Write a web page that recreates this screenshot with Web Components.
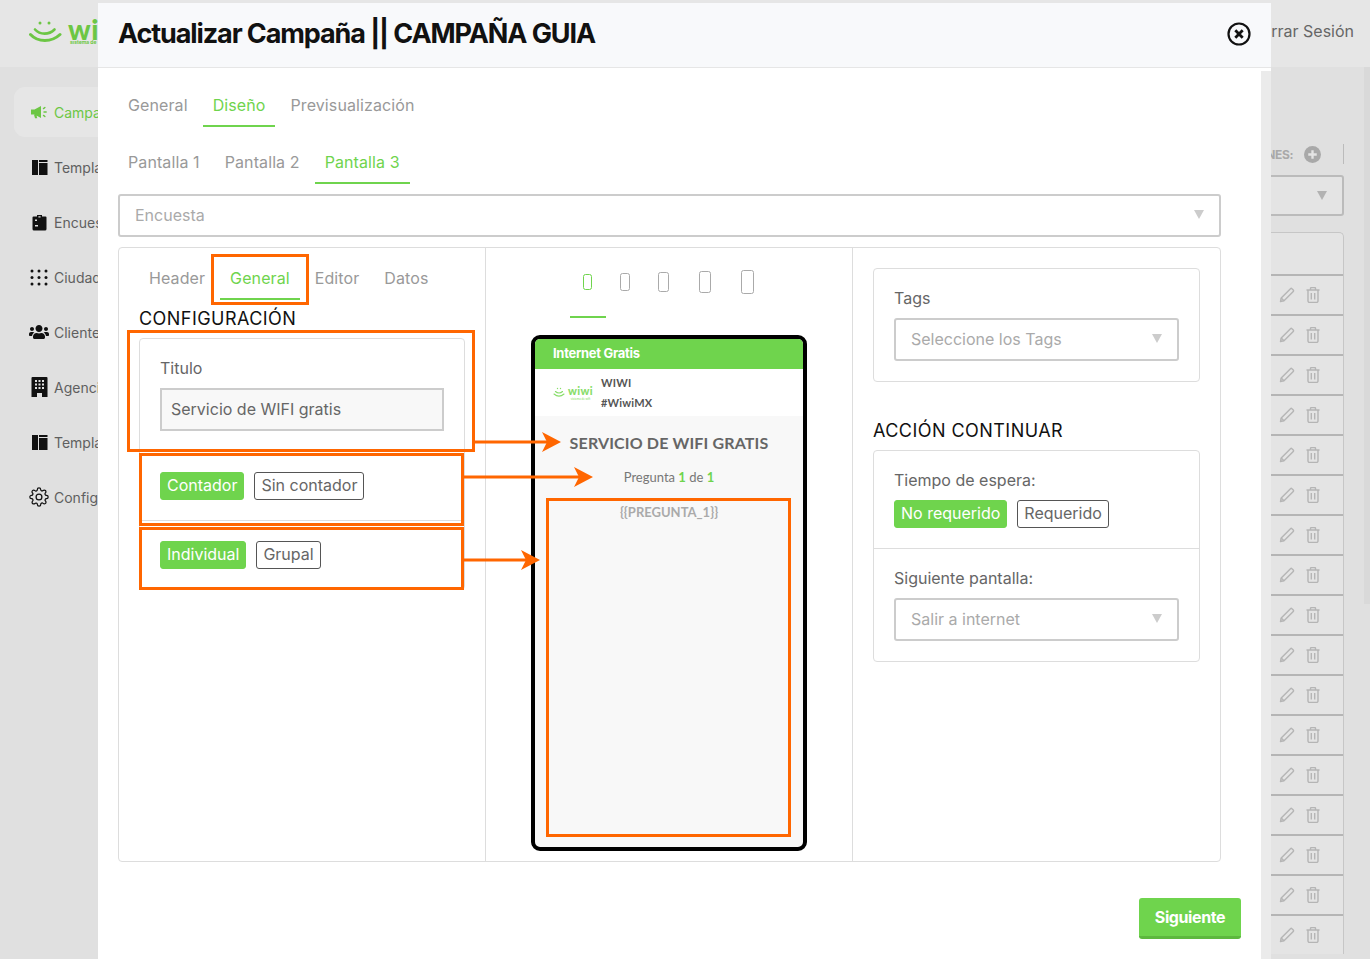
<!DOCTYPE html>
<html lang="es">
<head>
<meta charset="utf-8">
<title>Actualizar Campaña</title>
<style>
    html, body { margin: 0; height: 963px; overflow: hidden; background: #fff; }
    body { font-family: "Inter", "Liberation Sans", sans-serif; font-size: 16px; color: #666; position: relative; }
</style>
</head>
<body>
<app-backdrop></app-backdrop>

<campaign-modal title="Actualizar Campaña || CAMPAÑA GUIA">
    <tab-row items="General,Diseño,Previsualización" active="1"></tab-row>
    <tab-row items="Pantalla 1,Pantalla 2,Pantalla 3" active="2" style="margin-top:25px"></tab-row>
    <select-box text="Encuesta" style="margin-top:10px"></select-box>

    <three-panes>
        <div slot="left">
            <tab-row items="Header,General,Editor,Datos" active="1"></tab-row>
            <section-title style="margin-top:8px">CONFIGURACIÓN</section-title>
            <panel-card>
                <card-section>
                    <field-label>Titulo</field-label>
                    <text-field value="Servicio de WIFI gratis"></text-field>
                </card-section>
                <card-section>
                    <seg-buttons items="Contador,Sin contador"></seg-buttons>
                </card-section>
                <card-section last>
                    <seg-buttons items="Individual,Grupal"></seg-buttons>
                </card-section>
            </panel-card>
        </div>

        <div slot="center">
            <device-tabs></device-tabs>
            <phone-preview></phone-preview>
        </div>

        <div slot="right">
            <panel-card>
                <card-section last>
                    <field-label>Tags</field-label>
                    <select-box text="Seleccione los Tags"></select-box>
                </card-section>
            </panel-card>
            <section-title style="margin-top:38px">ACCIÓN CONTINUAR</section-title>
            <panel-card>
                <card-section>
                    <field-label>Tiempo de espera:</field-label>
                    <seg-buttons items="No requerido,Requerido"></seg-buttons>
                </card-section>
                <card-section last>
                    <field-label>Siguiente pantalla:</field-label>
                    <select-box text="Salir a internet"></select-box>
                </card-section>
            </panel-card>
        </div>
    </three-panes>

    <modal-footer>Siguiente</modal-footer>
</campaign-modal>

<mark-box x="211" y="254" w="98" h="51"></mark-box>
<mark-box x="127" y="330" w="348" h="122"></mark-box>
<mark-box x="139" y="453" w="325" h="73"></mark-box>
<mark-box x="139" y="527" w="325" h="63"></mark-box>
<mark-box x="546" y="498" w="245" h="339"></mark-box>
<mark-arrow x="474" y="442" to="561"></mark-arrow>
<mark-arrow x="464" y="477" to="593"></mark-arrow>
<mark-arrow x="464" y="560" to="540"></mark-arrow>

<script>
const ICONS = {
    bullhorn: `<svg viewBox="0 0 18 14" width="18" height="14"><path fill="currentColor" d="M1 4.500h3.500L11 1v12L4.500 9.500H1zM4 9.800h2.300l1 3.400H5z"/><path fill="none" stroke="currentColor" stroke-width="1.400" stroke-linecap="round" d="M13.500 3.600l1.400-1.100M14 7h2.200M13.500 10.400l1.400 1.100"/></svg>`,
    template: `<svg viewBox="0 0 17 17" width="17" height="17"><path fill="currentColor" d="M1 1h6v15H1zM8 1h8.500v2H8zM8 4h8.500v12H8z"/></svg>`,
    clipboard: `<svg viewBox="0 0 17 17" width="17" height="17"><path fill="currentColor" d="M2.500 2.500H6V1h5v1.500h3.500a1 1 0 0 1 1 1V15a1.500 1.500 0 0 1-1.500 1.500H3A1.500 1.500 0 0 1 1.500 15V3.500a1 1 0 0 1 1-1z"/><path fill="#e0e0e0" d="M7.400 2.200h2.200v1.400H7.400zM4 5.500h2v1.500H4zM4 11h3v1.500H4z"/></svg>`,
    dots: `<svg viewBox="0 0 18 17" width="18" height="17"><g fill="currentColor"><circle cx="2" cy="2" r="1.500"/><circle cx="9" cy="2" r="1.500"/><circle cx="16" cy="2" r="1.500"/><circle cx="2" cy="8.500" r="1.500"/><circle cx="9" cy="8.500" r="1.500"/><circle cx="16" cy="8.500" r="1.500"/><circle cx="2" cy="15" r="1.500"/><circle cx="9" cy="15" r="1.500"/><circle cx="16" cy="15" r="1.500"/></g></svg>`,
    users: `<svg viewBox="0 0 640 512" width="20" height="16"><path fill="currentColor" d="M96 224c35.300 0 64-28.700 64-64s-28.700-64-64-64-64 28.700-64 64 28.700 64 64 64zm448 0c35.300 0 64-28.700 64-64s-28.700-64-64-64-64 28.700-64 64 28.700 64 64 64zm32 32h-64c-17.600 0-33.500 7.100-45.100 18.600 40.300 22.100 68.900 62 75.100 109.400h66c17.700 0 32-14.300 32-32v-32c0-35.300-28.700-64-64-64zm-256 0c61.900 0 112-50.100 112-112S381.900 32 320 32 208 82.100 208 144s50.100 112 112 112zm76.800 32h-8.300c-20.800 10-43.900 16-68.500 16s-47.600-6-68.500-16h-8.300C179.600 288 128 339.600 128 403.200V432c0 26.500 21.500 48 48 48h288c26.500 0 48-21.500 48-48v-28.800c0-63.600-51.600-115.200-115.200-115.200zm-223.700-13.400C161.500 263.100 145.600 256 128 256H64c-35.300 0-64 28.700-64 64v32c0 17.700 14.300 32 32 32h65.900c6.300-47.400 34.900-87.300 75.200-109.400z"/></svg>`,
    building: `<svg viewBox="0 0 17 20" width="17" height="20"><path fill="currentColor" fill-rule="evenodd" d="M1.500 0h14a1 1 0 0 1 1 1v19h-5.500v-4H6v4H.5V1a1 1 0 0 1 1-1zM4 3v2h2V3zm3.500 0v2h2V3zM11 3v2h2V3zM4 6.500v2h2v-2zm3.500 0v2h2v-2zm3.500 0v2h2v-2zM4 10v2h2v-2zm3.500 0v2h2v-2zm3.500 0v2h2v-2z"/></svg>`,
    gear: `<svg viewBox="0 0 24 24" width="20" height="20" fill="none" stroke="currentColor" stroke-width="1.500"><circle cx="12" cy="12" r="3.500"/><path d="M19.400 15a1.650 1.650 0 0 0 .33 1.820l.06.06a2 2 0 0 1 0 2.830 2 2 0 0 1-2.830 0l-.06-.06a1.650 1.650 0 0 0-1.820-.33 1.650 1.650 0 0 0-1 1.510V21a2 2 0 0 1-2 2 2 2 0 0 1-2-2v-.09A1.650 1.650 0 0 0 9 19.400a1.650 1.650 0 0 0-1.820.33l-.06.06a2 2 0 0 1-2.830 0 2 2 0 0 1 0-2.830l.06-.06a1.650 1.650 0 0 0 .33-1.820 1.650 1.650 0 0 0-1.510-1H3a2 2 0 0 1-2-2 2 2 0 0 1 2-2h.09A1.650 1.650 0 0 0 4.600 9a1.650 1.650 0 0 0-.33-1.820l-.06-.06a2 2 0 0 1 0-2.830 2 2 0 0 1 2.830 0l.06.06a1.650 1.650 0 0 0 1.820.33H9a1.650 1.650 0 0 0 1-1.510V3a2 2 0 0 1 2-2 2 2 0 0 1 2 2v.09a1.650 1.650 0 0 0 1 1.510 1.650 1.650 0 0 0 1.820-.33l.06-.06a2 2 0 0 1 2.830 0 2 2 0 0 1 0 2.830l-.06.06a1.650 1.650 0 0 0-.33 1.820V9a1.650 1.650 0 0 0 1.510 1H21a2 2 0 0 1 2 2 2 2 0 0 1-2 2h-.09a1.650 1.650 0 0 0-1.510 1z"/></svg>`,
    pencil: `<svg viewBox="0 0 16 16" width="16" height="16" fill="none" stroke="currentColor" stroke-width="1.400" stroke-linejoin="round"><path d="M1.500 14.500l.7-3.500L11.500 1.700a1 1 0 0 1 1.400 0l1.400 1.400a1 1 0 0 1 0 1.400L5 13.800z"/><path d="M2.200 11l2.800 2.800"/></svg>`,
    trash: `<svg viewBox="0 0 14 16" width="14" height="16" fill="none" stroke="currentColor" stroke-width="1.400"><path d="M.5 3h13M4.500 3V1.500a1 1 0 0 1 1-1h3a1 1 0 0 1 1 1V3M2 3v11a1.500 1.500 0 0 0 1.500 1.500h7A1.500 1.500 0 0 0 12 14V3M5.300 6v6.500M8.700 6v6.500"/></svg>`,
    close: `<svg viewBox="0 0 24 24" width="24" height="24" fill="none" stroke="#111" stroke-width="2.200"><circle cx="12" cy="12" r="10.500"/><path stroke-width="2.800" d="M8.300 8.300l7.400 7.400M15.700 8.300l-7.400 7.400"/></svg>`,
    plus: `<svg viewBox="0 0 16 16" width="17" height="17"><circle cx="8" cy="8" r="8" fill="#a9a9a9"/><path d="M8 4v8M4 8h8" stroke="#e4e4e4" stroke-width="2.200"/></svg>`
}

class WiIcon extends HTMLElement {
    constructor() {
        super()
        this.attachShadow({ mode: 'open' })
        this.shadowRoot.innerHTML = /*html*/`
            <style>:host { display: inline-flex; align-items: center; justify-content: center; line-height: 0; }</style>
            ${ICONS[this.getAttribute("name")]}
        `
    }
}

class AppBackdrop extends HTMLElement {
    constructor() {
        super()
        this.attachShadow({ mode: 'open' })
        const nav = [
            ["bullhorn", "Campañas"], ["template", "Templates"], ["clipboard", "Encuestas"], ["dots", "Ciudades"],
            ["users", "Clientes"], ["building", "Agencias"], ["template", "Templates"], ["gear", "Configuración"]
        ]
        const rows = Array.from({ length: 17 }, () => /*html*/`
            <div class="row"><wi-icon name="pencil"></wi-icon><wi-icon name="trash"></wi-icon></div>
        `).join("")
        this.shadowRoot.innerHTML = /*html*/`
            <style>
                :host { display: flex; flex-direction: column; height: 959px; overflow: hidden; background: #e0e0e0; color: #666; }
                .top {
                    height: 67px;
                    flex: none;
                    box-sizing: border-box;
                    background: #e6e6e6;
                    display: flex;
                    align-items: center;
                    justify-content: space-between;
                    padding: 0 16px 5px 29px;
                }
                .logo { display: flex; align-items: center; gap: 6px; color: #6cc644; margin-top: 2px; }
                .word { display: flex; flex-direction: column; line-height: 1; white-space: nowrap; }
                .word b { font-family: "Lato", sans-serif; font-weight: 900; font-size: 28px; line-height: 19px; letter-spacing: .5px; }
                .word small { font-size: 5px; line-height: 6px; font-weight: 700; padding-left: 2px; }
                .logout { font-size: 16px; color: #666; }
                .body { flex: 1; display: flex; min-height: 0; }
                nav { width: 220px; padding: 20px 14px; box-sizing: border-box; }
                .item {
                    height: 50px;
                    margin-bottom: 5px;
                    display: flex;
                    align-items: center;
                    box-sizing: border-box;
                    border-radius: 11px;
                    font-size: 14px;
                    color: #5f5f5f;
                }
                .item wi-icon { width: 22px; margin: 0 4px 0 14px; color: #111; }
                .item.on { background: #e6e6e6; color: #6cc644; }
                .item.on wi-icon { color: #6cc644; }
                main { flex: 1; min-width: 0; padding: 77px 6px 0 20px; display: flex; flex-direction: column; align-items: flex-end; overflow: hidden; }
                .actions { display: flex; align-items: center; height: 20px; font-size: 12px; font-weight: 700; color: #a9a9a9; }
                .actions span { letter-spacing: -.4px; }
                .actions wi-icon { margin: 0 22px 0 11px; }
                .actions i { width: 1px; height: 20px; background: #bbb; }
                .sel {
                    width: 100%;
                    height: 41px;
                    margin-top: 11px;
                    box-sizing: border-box;
                    border: 2px solid #bbb;
                    border-radius: 3px;
                    background: #e4e4e4;
                    display: flex;
                    align-items: center;
                    justify-content: flex-end;
                    padding-right: 15px;
                }
                .sel::after { content: ""; border: 5.500px solid transparent; border-top: 9px solid #b2b2b2; border-bottom: 0; }
                .table {
                    width: 100%;
                    margin-top: 16px;
                    border: 1px solid #c6c6c6;
                    border-bottom: 0;
                    border-radius: 5px 5px 0 0;
                    box-sizing: border-box;
                    background: #e4e4e4;
                }
                .head { height: 41px; }
                .row {
                    height: 38px;
                    border-top: 2px solid #b5b5b5;
                    display: flex;
                    align-items: center;
                    justify-content: flex-end;
                    gap: 11px;
                    padding-right: 23px;
                    color: #b5b5b5;
                }
                .scroll { flex: 0 0 20px; display: flex; justify-content: flex-end; }
                .bar { width: 6px; height: 537px; background: #d9d9d9; }
            </style>
            <div class="top">
                <div class="logo">
                    <svg width="33" height="24" viewBox="0 0 33 24" fill="none" stroke="currentColor" stroke-linecap="round">
                        <circle cx="11" cy="3" r="1.500" fill="currentColor" stroke="none"/>
                        <circle cx="20" cy="3" r="1.500" fill="currentColor" stroke="none"/>
                        <path stroke-width="2.600" d="M6 9.500c5 5.500 14 5.500 19.500 0"/>
                        <path stroke-width="3" d="M1.500 14.500c7.500 8 21 8 29.500 0"/>
                    </svg>
                    <div class="word"><b>wi</b><small>sistema de</small></div>
                </div>
                <span class="logout">Cerrar Sesión</span>
            </div>
            <div class="body">
                <nav>
                    ${nav.map(([icon, text], i) => /*html*/`
                        <div class="item ${i == 0 ? "on" : ""}"><wi-icon name="${icon}"></wi-icon>${text}</div>
                    `).join("")}
                </nav>
                <main>
                    <div class="actions"><span>ACCIONES:</span><wi-icon name="plus"></wi-icon><i></i></div>
                    <div class="sel"></div>
                    <div class="table"><div class="head"></div>${rows}</div>
                </main>
                <div class="scroll"><div class="bar"></div></div>
            </div>
        `
    }
}

class CampaignModal extends HTMLElement {
    constructor() {
        super()
        this.attachShadow({ mode: 'open' })
        this.shadowRoot.innerHTML = /*html*/`
            <style>
                :host {
                    position: absolute;
                    left: 98px;
                    top: 3px;
                    width: 1173px;
                    height: 956px;
                    display: flex;
                    flex-direction: column;
                }
                header {
                    height: 65px;
                    flex: none;
                    box-sizing: border-box;
                    background: #f8f9fb;
                    border-bottom: 1px solid #e6e6e6;
                    padding: 0 20px 3px;
                    display: flex;
                    align-items: center;
                    justify-content: space-between;
                }
                h1 { margin: 0 0 1px; font-size: 27px; font-weight: 700; letter-spacing: -1.1px; color: #111; }
                .wrap { flex: 1; display: flex; min-height: 0; background: #fff; }
                .content { width: 1163px; box-sizing: border-box; padding: 27px 40px 0 20px; background: #fff; }
                .track { flex: 1; background: #ebebeb; margin-top: 3px; }
            </style>
            <header>
                <h1>${this.getAttribute("title")}</h1>
                <wi-icon name="close"></wi-icon>
            </header>
            <div class="wrap">
                <div class="content"><slot></slot></div>
                <div class="track"></div>
            </div>
        `
    }
}

class TabRow extends HTMLElement {
    constructor() {
        super()
        this.attachShadow({ mode: 'open' })
        const items = this.getAttribute("items").split(",")
        const active = +this.getAttribute("active")
        this.shadowRoot.innerHTML = /*html*/`
            <style>
                :host { display: flex; gap: 5px; }
                span {
                    padding: 0 10px 10px;
                    line-height: 20px;
                    font-size: 16px;
                    letter-spacing: .1px;
                    color: #999;
                    border-bottom: 2px solid transparent;
                }
                .on { color: #6fd44d; border-bottom-color: #6fd44d; }
            </style>
            ${items.map((t, i) => `<span class="${i == active ? "on" : ""}">${t}</span>`).join("")}
        `
    }
}

class SelectBox extends HTMLElement {
    constructor() {
        super()
        this.attachShadow({ mode: 'open' })
        this.shadowRoot.innerHTML = /*html*/`
            <style>
                :host {
                    display: flex;
                    height: 43px;
                    box-sizing: border-box;
                    border: 2px solid #ccc;
                    border-radius: 3px;
                    align-items: center;
                    justify-content: space-between;
                    padding: 0 15px 2px 15px;
                    color: #aaa;
                    font-size: 16px;
                    background: #fff;
                }
                i { border: 5px solid transparent; border-top: 9px solid #ccc; border-bottom: 0; }
            </style>
            <span>${this.getAttribute("text")}</span><i></i>
        `
    }
}

class ThreePanes extends HTMLElement {
    constructor() {
        super()
        this.attachShadow({ mode: 'open' })
        this.shadowRoot.innerHTML = /*html*/`
            <style>
                :host {
                    display: grid;
                    grid-template-columns: repeat(3, 1fr);
                    height: 615px;
                    margin-top: 10px;
                    box-sizing: border-box;
                    border: 1px solid #ddd;
                    border-radius: 4px;
                }
                .pane { padding: 20px; min-width: 0; border-right: 1px solid #ddd; }
                .pane:last-child { border-right: 0; }
                .mid { padding: 20px 0 0; display: flex; flex-direction: column; align-items: center; }
            </style>
            <div class="pane"><slot name="left"></slot></div>
            <div class="pane mid"><slot name="center"></slot></div>
            <div class="pane"><slot name="right"></slot></div>
        `
    }
}

class SectionTitle extends HTMLElement {
    constructor() {
        super()
        this.attachShadow({ mode: 'open' })
        this.shadowRoot.innerHTML = /*html*/`
            <style>:host { display: block; font-size: 18px; line-height: 22px; color: #111; letter-spacing: .45px; margin-bottom: 8px; }</style>
            <slot></slot>
        `
    }
}

class PanelCard extends HTMLElement {
    constructor() {
        super()
        this.attachShadow({ mode: 'open' })
        this.shadowRoot.innerHTML = /*html*/`
            <style>:host { display: block; border: 1px solid #ddd; border-radius: 4px; background: #fff; }</style>
            <slot></slot>
        `
    }
}

class CardSection extends HTMLElement {
    constructor() {
        super()
        this.attachShadow({ mode: 'open' })
        this.shadowRoot.innerHTML = /*html*/`
            <style>
                :host { display: block; padding: 20px; border-bottom: 1px solid #ddd; }
                :host([last]) { border-bottom: 0; }
            </style>
            <slot></slot>
        `
    }
}

class FieldLabel extends HTMLElement {
    constructor() {
        super()
        this.attachShadow({ mode: 'open' })
        this.shadowRoot.innerHTML = /*html*/`
            <style>:host { display: block; font-size: 16px; line-height: 20px; color: #666; margin: -1px 0 10px; }</style>
            <slot></slot>
        `
    }
}

class TextField extends HTMLElement {
    constructor() {
        super()
        this.attachShadow({ mode: 'open' })
        this.shadowRoot.innerHTML = /*html*/`
            <style>
                :host {
                    display: flex;
                    align-items: center;
                    height: 43px;
                    box-sizing: border-box;
                    border: 2px solid #ccc;
                    background: #f8f8f8;
                    padding: 0 9px 2px;
                    font-size: 16px;
                    color: #666;
                }
            </style>
            ${this.getAttribute("value")}
        `
    }
}

class SegButtons extends HTMLElement {
    constructor() {
        super()
        this.attachShadow({ mode: 'open' })
        const [on, off] = this.getAttribute("items").split(",")
        this.shadowRoot.innerHTML = /*html*/`
            <style>
                :host { display: flex; gap: 10px; }
                span {
                    height: 28px;
                    box-sizing: border-box;
                    padding: 0 6px 2px;
                    display: flex;
                    align-items: center;
                    border: 1px solid #555;
                    border-radius: 3px;
                    font-size: 16px;
                    color: #666;
                }
                .on { background: #6fd44d; border-color: #6fd44d; color: #fff; }
            </style>
            <span class="on">${on}</span><span>${off}</span>
        `
    }
}

class DeviceTabs extends HTMLElement {
    constructor() {
        super()
        this.attachShadow({ mode: 'open' })
        const sizes = [[36, 9, 16], [38, 10, 18], [40, 11, 20], [42, 12, 22], [43, 13, 24]]
        this.shadowRoot.innerHTML = /*html*/`
            <style>
                :host { display: flex; justify-content: center; height: 50px; }
                div { height: 46px; border-bottom: 2px solid transparent; padding-top: 2px; display: flex; justify-content: center; }
                .on { border-bottom-color: #6fd44d; }
                b { display: block; box-sizing: border-box; border: 1.500px solid #aaa; border-radius: 2.500px; margin-top: calc(12px - var(--h) / 2); height: var(--h); width: var(--w); }
                .on b { border-color: #6fd44d; }
            </style>
            ${sizes.map(([tab, w, h], i) => /*html*/`
                <div class="${i == 0 ? "on" : ""}" style="width:${tab}px"><b style="--w:${w}px;--h:${h}px"></b></div>
            `).join("")}
        `
    }
}

class PhonePreview extends HTMLElement {
    constructor() {
        super()
        this.attachShadow({ mode: 'open' })
        this.shadowRoot.innerHTML = /*html*/`
            <style>
                :host {
                    display: flex;
                    flex-direction: column;
                    width: 276px;
                    height: 516px;
                    margin-top: 17px;
                    box-sizing: border-box;
                    border: 4px solid #000;
                    border-radius: 9px;
                    overflow: hidden;
                    font-family: "Lato", "Open Sans", sans-serif;
                    background: #f8f8f8;
                }
                .bar {
                    height: 30px;
                    flex: none;
                    box-sizing: border-box;
                    background: #6fd44d;
                    color: #fff;
                    font-family: "Inter", sans-serif;
                    font-weight: 700;
                    font-size: 13px;
                    letter-spacing: -.3px;
                    display: flex;
                    align-items: center;
                    padding: 0 0 2px 18px;
                }
                .id { height: 47px; flex: none; background: #fff; display: flex; align-items: center; padding-left: 18px; }
                .mini { display: flex; align-items: center; gap: 3px; width: 48px; color: #88dd6a; }
                .mini b { font-size: 11px; font-weight: 900; letter-spacing: .4px; line-height: 13px; display: block; }
                .mini small { display: block; font-size: 3px; line-height: 4px; text-align: center; }
                .names { font-size: 11px; line-height: 20px; font-weight: 700; color: #555; letter-spacing: .2px; }
                .body { flex: 1; text-align: center; }
                h2 { margin: 17px 0 0; font-size: 16px; line-height: 20px; font-weight: 700; color: #666; letter-spacing: .15px; }
                p { margin: 14px 0 0; font-size: 13px; line-height: 20px; color: #777; }
                p b { color: #6fd44d; }
                .q { margin-top: 18px; font-size: 13px; line-height: 15px; font-weight: 700; color: #aaa; }
            </style>
            <div class="bar">Internet Gratis</div>
            <div class="id">
                <div class="mini">
                    <svg width="12" height="11" viewBox="0 0 12 11" fill="none" stroke="currentColor" stroke-width="1.100" stroke-linecap="round">
                        <circle cx="4.500" cy="1.500" r=".7" fill="currentColor" stroke="none"/>
                        <circle cx="7.500" cy="1.500" r=".7" fill="currentColor" stroke="none"/>
                        <path d="M2.500 4.500c2 2 5 2 7 0M1 7c3 2.500 7 2.500 10 0"/>
                    </svg>
                    <div><b>wiwi</b><small>sistema de wifi</small></div>
                </div>
                <div class="names">WIWI<br>#WiwiMX</div>
            </div>
            <div class="body">
                <h2>SERVICIO DE WIFI GRATIS</h2>
                <p>Pregunta <b>1</b> de <b>1</b></p>
                <div class="q">{{PREGUNTA_1}}</div>
            </div>
        `
    }
}

class ModalFooter extends HTMLElement {
    constructor() {
        super()
        this.attachShadow({ mode: 'open' })
        this.shadowRoot.innerHTML = /*html*/`
            <style>
                :host { display: flex; justify-content: flex-end; margin: 36px -20px 0 0; }
                button {
                    width: 102px;
                    height: 41px;
                    border: 0;
                    border-bottom: 3px solid #5db83e;
                    border-radius: 3px;
                    background: #6fd44d;
                    color: #fff;
                    font: 700 16px "Inter", sans-serif;
                    letter-spacing: -.4px;
                    padding: 0;
                }
            </style>
            <button><slot></slot></button>
        `
    }
}

class MarkBox extends HTMLElement {
    constructor() {
        super()
        this.attachShadow({ mode: 'open' })
        const a = n => this.getAttribute(n)
        this.shadowRoot.innerHTML = /*html*/`
            <style>
                :host {
                    position: absolute;
                    left: ${a("x")}px;
                    top: ${a("y")}px;
                    width: ${a("w")}px;
                    height: ${a("h")}px;
                    box-sizing: border-box;
                    border: 3px solid #ff6600;
                }
            </style>
        `
    }
}

class MarkArrow extends HTMLElement {
    constructor() {
        super()
        this.attachShadow({ mode: 'open' })
        const x = +this.getAttribute("x")
        const y = +this.getAttribute("y")
        const w = +this.getAttribute("to") - x
        this.shadowRoot.innerHTML = /*html*/`
            <style>:host { position: absolute; left: ${x}px; top: ${y - 11}px; width: ${w}px; height: 22px; line-height: 0; }</style>
            <svg width="${w}" height="22" viewBox="0 0 ${w} 22">
                <path d="M0 9.500h${w - 14}v3H0z" fill="#ff6600"/>
                <path d="M${w - 19} 1 L${w} 11 L${w - 19} 21 L${w - 14} 11z" fill="#ff6600"/>
            </svg>
        `
    }
}

customElements.define('wi-icon', WiIcon)
customElements.define('app-backdrop', AppBackdrop)
customElements.define('campaign-modal', CampaignModal)
customElements.define('tab-row', TabRow)
customElements.define('select-box', SelectBox)
customElements.define('three-panes', ThreePanes)
customElements.define('section-title', SectionTitle)
customElements.define('panel-card', PanelCard)
customElements.define('card-section', CardSection)
customElements.define('field-label', FieldLabel)
customElements.define('text-field', TextField)
customElements.define('seg-buttons', SegButtons)
customElements.define('device-tabs', DeviceTabs)
customElements.define('phone-preview', PhonePreview)
customElements.define('modal-footer', ModalFooter)
customElements.define('mark-box', MarkBox)
customElements.define('mark-arrow', MarkArrow)
</script>
</body>
</html>
